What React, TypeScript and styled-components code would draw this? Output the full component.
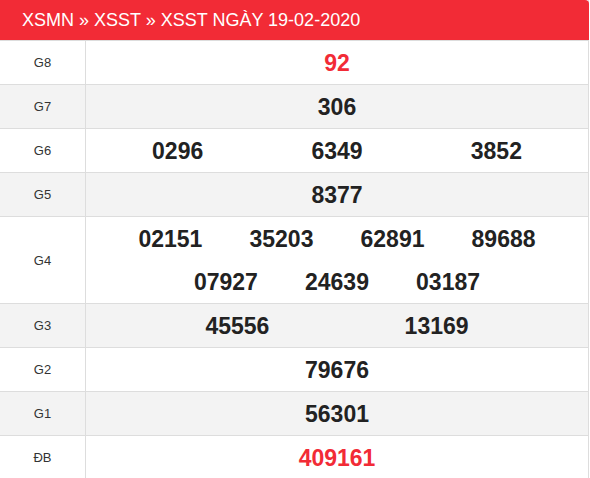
import React from 'react';
import styled, { createGlobalStyle } from 'styled-components';

const GlobalStyle = createGlobalStyle`
  html, body {
    margin: 0;
    padding: 0;
    background: #fff;
  }
  body {
    font-family: Arial, 'Liberation Sans', Helvetica, sans-serif;
  }
`;

interface Prize {
  label: string;
  numbers: string[];
  width: string;
  red?: boolean;
}

const prizes: Prize[] = [
  { label: 'G8', numbers: ['92'], width: '100%', red: true },
  { label: 'G7', numbers: ['306'], width: '100%' },
  { label: 'G6', numbers: ['0296', '6349', '3852'], width: '32%' },
  { label: 'G5', numbers: ['8377'], width: '100%' },
  {
    label: 'G4',
    numbers: ['02151', '35203', '62891', '89688', '07927', '24639', '03187'],
    width: '22.3%',
  },
  { label: 'G3', numbers: ['45556', '13169'], width: '40%' },
  { label: 'G2', numbers: ['79676'], width: '100%' },
  { label: 'G1', numbers: ['56301'], width: '100%' },
  { label: 'ĐB', numbers: ['409161'], width: '100%', red: true },
];

const ResultBox = styled.div`
  width: 589px;
  border-right: 1px solid #dddddd;
  box-sizing: border-box;
  font-family: Arial, 'Liberation Sans', Helvetica, sans-serif;
`;

const Header = styled.h2`
  margin: 0;
  height: 40px;
  padding-left: 22px;
  display: flex;
  align-items: center;
  background: #f22b36;
  color: #ffffff;
  font-size: 18px;
  font-weight: 400;
  border-top-right-radius: 4px;
  border-bottom: 1px solid #dddddd;
  margin-right: -1px;
`;

const Row = styled.div<{ $striped: boolean }>`
  display: flex;
  border-bottom: 1px solid #dddddd;
  background: ${(p) => (p.$striped ? '#f3f3f3' : '#ffffff')};
`;

const Label = styled.div`
  width: 85px;
  flex-shrink: 0;
  border-right: 1px solid #dddddd;
  display: flex;
  align-items: center;
  justify-content: center;
  font-size: 13px;
  color: #333333;
`;

const NumberCell = styled.div`
  flex: 1;
  display: flex;
  flex-wrap: wrap;
  justify-content: center;
  align-content: center;
  padding: 0 2px;
  min-height: 43px;
`;

const Number = styled.span<{ $width: string; $red?: boolean }>`
  width: ${(p) => p.$width};
  height: 43px;
  line-height: 44px;
  text-align: center;
  font-size: 23px;
  font-weight: 700;
  color: ${(p) => (p.$red ? '#f22b36' : '#222222')};
`;

export default function App() {
  return (
    <>
      <GlobalStyle />
      <ResultBox>
        <Header>XSMN » XSST » XSST NGÀY 19-02-2020</Header>
        {prizes.map((prize, i) => (
          <Row key={prize.label} $striped={i % 2 === 1}>
            <Label>{prize.label}</Label>
            <NumberCell>
              {prize.numbers.map((n) => (
                <Number key={n} $width={prize.width} $red={prize.red}>
                  {n}
                </Number>
              ))}
            </NumberCell>
          </Row>
        ))}
      </ResultBox>
    </>
  );
}
